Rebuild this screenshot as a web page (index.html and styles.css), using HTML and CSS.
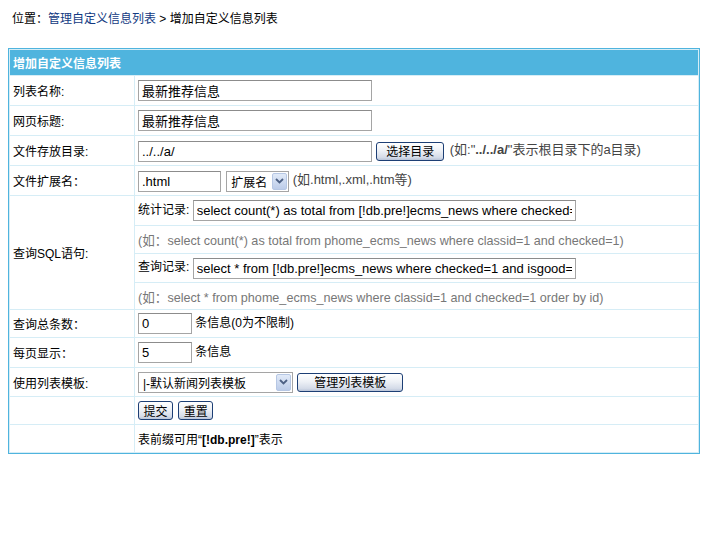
FILE: index.html
```html
<!DOCTYPE html>
<html>

<head>
    <title>增加自定义信息列表</title>
    <meta charset="utf-8">
    <link rel="stylesheet" href="styles.css">
</head>

<body>
    <div class="position">位置：<a href="#">管理自定义信息列表</a> &gt; 增加自定义信息列表</div>

    <form class="add-form">
        <table class="tableborder">
            <tr class="header">
                <td colspan="2">增加自定义信息列表</td>
            </tr>
            <tr>
                <td class="label">列表名称:</td>
                <td><input type="text" class="text-long" value="最新推荐信息"></td>
            </tr>
            <tr>
                <td class="label">网页标题:</td>
                <td><input type="text" class="text-long" value="最新推荐信息"></td>
            </tr>
            <tr>
                <td class="label">文件存放目录:</td>
                <td>
                    <input type="text" class="text-long" value="../../a/">
                    <button type="button" class="btn btn-dir">选择目录</button>
                    <span class="note">(如:"<b>../../a/</b>"表示根目录下的a目录)</span>
                </td>
            </tr>
            <tr>
                <td class="label">文件扩展名：</td>
                <td>
                    <input type="text" class="text-ext" value=".html">
                    <span class="fake-select select-ext">扩展名<span class="arrow"><svg width="9" height="6" viewBox="0 0 9 6"><path d="M1 1l3.5 3.5L8 1" fill="none" stroke="#4d6185" stroke-width="1.8"/></svg></span></span>
                    <span class="note">(如.html,.xml,.htm等)</span>
                </td>
            </tr>
            <tr class="h29">
                <td class="label" rowspan="4">查询SQL语句:</td>
                <td>统计记录: <input type="text" class="text-sql" value="select count(*) as total from [!db.pre!]ecms_news where checked=1"></td>
            </tr>
            <tr class="h27">
                <td class="hint">(如：select count(*) as total from phome_ecms_news where classid=1 and checked=1)</td>
            </tr>
            <tr class="h28">
                <td>查询记录: <input type="text" class="text-sql" value="select * from [!db.pre!]ecms_news where checked=1 and isgood=1"></td>
            </tr>
            <tr class="h26">
                <td class="hint">(如：select * from phome_ecms_news where classid=1 and checked=1 order by id)</td>
            </tr>
            <tr class="h27">
                <td class="label">查询总条数：</td>
                <td><input type="text" class="text-num" value="0"> 条信息(0为不限制)</td>
            </tr>
            <tr class="h29">
                <td class="label">每页显示：</td>
                <td><input type="text" class="text-num" value="5"> 条信息</td>
            </tr>
            <tr class="h28">
                <td class="label">使用列表模板:</td>
                <td>
                    <span class="fake-select select-temp">|-默认新闻列表模板<span class="arrow"><svg width="9" height="6" viewBox="0 0 9 6"><path d="M1 1l3.5 3.5L8 1" fill="none" stroke="#4d6185" stroke-width="1.8"/></svg></span></span>
                    <button type="button" class="btn btn-temp">管理列表模板</button>
                </td>
            </tr>
            <tr class="h27">
                <td class="label"></td>
                <td>
                    <button type="submit" class="btn btn-small">提交</button>
                    <button type="reset" class="btn btn-small">重置</button>
                </td>
            </tr>
            <tr class="h27">
                <td class="label"></td>
                <td>表前缀可用“<b>[!db.pre!]</b>”表示</td>
            </tr>
        </table>
    </form>
</body>

</html>
```

FILE: styles.css
```css
body {
    margin: 8px;
    background: #fff;
    color: #000;
    font-family: "Liberation Sans", "Noto Sans CJK SC", sans-serif;
    font-size: 12px;
}

.position {
    margin: 4px 0 22px 0;
    padding-left: 4px;
    line-height: 14px;
}

.position a {
    color: #123a82;
    text-decoration: none;
}

.add-form {
    margin: 0;
}

.tableborder {
    width: 692px;
    border: 1px solid #4fb4de;
    border-spacing: 1px;
    background: #d6edf6;
}

.tableborder td {
    background: #fff;
    padding: 0 3px;
    height: 29px;
    white-space: nowrap;
}

.tableborder .header td {
    background: #4fb4de;
    color: #fff;
    font-weight: bold;
    height: 25px;
}

.tableborder .h29 td {
    height: 29px;
}

.tableborder .h28 td {
    height: 28px;
}

.tableborder .h27 td {
    height: 27px;
}

.tableborder .h26 td {
    height: 26px;
}

.tableborder .label {
    width: 118px;
}

.tableborder .hint {
    color: #777;
    font-size: 12.6px;
}

.note {
    color: #444;
    font-size: 13px;
}

input[type="text"] {
    height: 21px;
    box-sizing: border-box;
    border: 1px solid #a5a5a5;
    border-top-color: #8c8c8c;
    padding: 1px 3px;
    margin: 0;
    font-family: "Liberation Sans", "Noto Sans CJK SC", sans-serif;
    font-size: 13px;
    vertical-align: middle;
    color: #000;
}

.text-long {
    width: 234px;
}

.text-ext {
    width: 83px;
}

.text-num {
    width: 54px;
}

.text-sql {
    width: 383px;
}

.fake-select {
    display: inline-flex;
    align-items: center;
    justify-content: space-between;
    box-sizing: border-box;
    height: 21px;
    border: 1px solid #a5a5a5;
    padding: 0 1px 0 4px;
    vertical-align: middle;
    background: #fff;
}

.select-ext {
    width: 63px;
    margin-left: 2px;
}

.select-temp {
    width: 155px;
}

.arrow {
    display: inline-flex;
    align-items: center;
    justify-content: center;
    width: 15px;
    height: 17px;
    box-sizing: border-box;
    border: 1px solid #b6c7e4;
    border-radius: 2px;
    background: linear-gradient(#e1eaf8, #bccce9);
}

.btn {
    box-sizing: border-box;
    height: 19px;
    padding: 0 4px;
    margin: 0;
    border: 1px solid #1d3f75;
    border-radius: 3px;
    background: linear-gradient(#ffffff 0%, #eef1f6 45%, #d4dbe8 85%, #b9c4d8 100%);
    font-family: "Noto Sans CJK SC", sans-serif;
    font-size: 12px;
    line-height: 16px;
    color: #000;
    vertical-align: middle;
    cursor: pointer;
}

.btn-dir {
    width: 68px;
    margin: 0 2px 0 1px;
}

.btn-temp {
    width: 106px;
    margin-left: 1px;
}

.btn-small {
    width: 35px;
    padding: 0;
    margin-right: 2px;
}
```
